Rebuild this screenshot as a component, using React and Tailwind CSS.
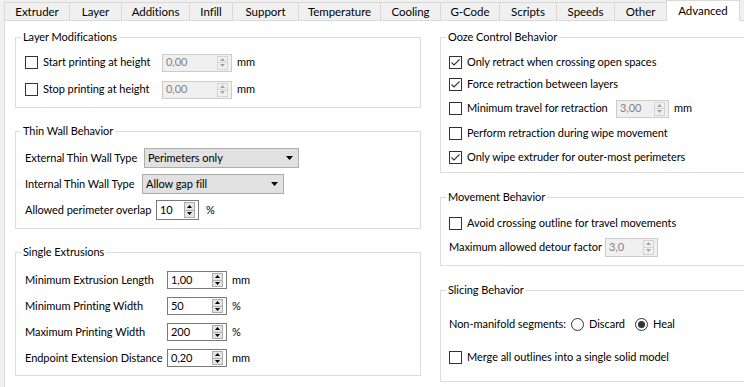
import React from 'react'

const TABS = [
  { label: 'Extruder', w: 65 },
  { label: 'Layer', w: 52 },
  { label: 'Additions', w: 68 },
  { label: 'Infill', w: 43 },
  { label: 'Support', w: 66 },
  { label: 'Temperature', w: 82 },
  { label: 'Cooling', w: 60 },
  { label: 'G-Code', w: 59 },
  { label: 'Scripts', w: 57 },
  { label: 'Speeds', w: 58 },
  { label: 'Other', w: 52 },
]

function CheckBox({ checked, label, className = '' }) {
  return (
    <div className={`flex items-center gap-[5px] ${className}`}>
      <svg width="13" height="13" viewBox="0 0 13 13" className="shrink-0">
        <rect x="0.5" y="0.5" width="12" height="12" fill="#fff" stroke="#333" />
        {checked && <path d="M2.5 6.5 L5 9 L10.5 3.5" fill="none" stroke="#333" strokeWidth="1.1" />}
      </svg>
      <span className="whitespace-nowrap">{label}</span>
    </div>
  )
}

function Radio({ checked, label, className = '' }) {
  return (
    <div className={`flex items-center gap-[5px] ${className}`}>
      <span className="flex h-[13px] w-[13px] shrink-0 items-center justify-center rounded-full border border-[#333] bg-white">
        {checked && <span className="h-[7px] w-[7px] rounded-full bg-[#333]" />}
      </span>
      <span className="whitespace-nowrap">{label}</span>
    </div>
  )
}

function Arrow({ up, color }) {
  return (
    <svg width="5" height="3" viewBox="0 0 5 3">
      <path d={up ? 'M0 3 L2.5 0 L5 3 Z' : 'M0 0 L5 0 L2.5 3 Z'} fill={color} />
    </svg>
  )
}

function SpinBox({ value, disabled, className = '' }) {
  const box = disabled
    ? 'border-[#cccccc] bg-[#f0f0f0] text-[#838383]'
    : 'border-[#7a7a7a] bg-white text-black'
  const btn = disabled ? 'border-[#d4d4d4] bg-[#f0f0f0]' : 'border-[#adadad] bg-[#e5e5e5]'
  const arrow = disabled ? '#a3a3a3' : '#000'
  return (
    <div className={`flex shrink-0 border ${box} ${className}`}>
      <span className="flex flex-1 items-center pl-[3px]">{value}</span>
      <div className="my-[1px] mr-[3px] flex w-[11px] flex-col">
        <div className={`flex flex-1 items-center justify-center border ${btn}`}>
          <Arrow up color={arrow} />
        </div>
        <div className={`-mt-px flex flex-1 items-center justify-center border ${btn}`}>
          <Arrow color={arrow} />
        </div>
      </div>
    </div>
  )
}

function ComboBox({ value, className = '' }) {
  return (
    <div className={`flex h-[20px] shrink-0 items-center justify-between border border-[#adadad] bg-[#e1e1e1] pl-[3px] pr-[5px] ${className}`}>
      <span className="whitespace-nowrap">{value}</span>
      <svg width="7" height="4" viewBox="0 0 7 4">
        <path d="M0 0 H7 L3.5 4 Z" fill="#000" />
      </svg>
    </div>
  )
}

function GroupBox({ title, className = '', children }) {
  return (
    <div className={`relative border border-[#dcdcdc] ${className}`}>
      <span className="absolute left-[5px] top-[-9px] bg-white px-[2px] leading-[16px] whitespace-nowrap">{title}</span>
      {children}
    </div>
  )
}

export default function App() {
  return (
    <div className="h-[387px] w-[744px] overflow-hidden bg-[#f0f0f0] font-['Segoe_UI',Lato,sans-serif] text-[11px] tracking-[-0.05px] text-black">
      {/* tabs */}
      <div className="flex h-[21px] pl-[4px] text-[11.5px]">
        {TABS.map((t) => (
          <div
            key={t.label}
            style={{ width: t.w }}
            className="mt-[2px] flex h-[18px] shrink-0 items-center justify-center border-l border-t border-[#d9d9d9] bg-[#f0f0f0]"
          >
            {t.label}
          </div>
        ))}
        <div className="relative z-10 flex h-[21px] w-[74px] shrink-0 items-center justify-center border-x border-t border-[#d9d9d9] bg-white pb-px">
          Advanced
        </div>
      </div>

      {/* page */}
      <div className="-mt-px ml-[4px] flex h-[400px] w-[800px] gap-[19px] border border-[#d9d9d9] bg-white pl-[10px] pt-[16px]">
        {/* left column */}
        <div className="flex w-[406px] shrink-0 flex-col">
          <GroupBox title="Layer Modifications" className="h-[71px] pl-[9px] pt-[11px]">
            <div className="flex h-[27px] items-center">
              <CheckBox label="Start printing at height" className="w-[137px]" />
              <SpinBox value="0,00" disabled className="h-[18px] w-[70px]" />
              <span className="ml-[5px]">mm</span>
            </div>
            <div className="flex h-[27px] items-center">
              <CheckBox label="Stop printing at height" className="w-[137px]" />
              <SpinBox value="0,00" disabled className="h-[18px] w-[70px]" />
              <span className="ml-[5px]">mm</span>
            </div>
          </GroupBox>

          <GroupBox title="Thin Wall Behavior" className="mt-[23px] h-[98px] pl-[9px] pt-[13px]">
            <div className="flex h-[26px] items-center">
              <span className="w-[119px] whitespace-nowrap">External Thin Wall Type</span>
              <ComboBox value="Perimeters only" className="w-[155px]" />
            </div>
            <div className="flex h-[26px] items-center">
              <span className="w-[117px] whitespace-nowrap">Internal Thin Wall Type</span>
              <ComboBox value="Allow gap fill" className="w-[142px]" />
            </div>
            <div className="flex h-[26px] items-center">
              <span className="w-[131px] whitespace-nowrap">Allowed perimeter overlap</span>
              <SpinBox value="10" className="h-[20px] w-[43px]" />
              <span className="ml-[7px]">%</span>
            </div>
          </GroupBox>

          <GroupBox title="Single Extrusions" className="mt-[23px] h-[124px] pl-[9px] pt-[14px]">
            {[
              ['Minimum Extrusion Length', '1,00', 'mm'],
              ['Minimum Printing Width', '50', '%'],
              ['Maximum Printing Width', '200', '%'],
              ['Endpoint Extension Distance', '0,20', 'mm'],
            ].map(([label, value, unit]) => (
              <div key={label} className="flex h-[26px] items-center">
                <span className="w-[142px] whitespace-nowrap">{label}</span>
                <SpinBox value={value} className="h-[18px] w-[60px]" />
                <span className="ml-[5px]">{unit}</span>
              </div>
            ))}
          </GroupBox>
        </div>

        {/* right column */}
        <div className="flex w-[330px] shrink-0 flex-col">
          <GroupBox title="Ooze Control Behavior" className="h-[136px] pl-[8px] pt-[13px]">
            <div className="flex h-[22px] items-center">
              <CheckBox checked label="Only retract when crossing open spaces" />
            </div>
            <div className="flex h-[23px] items-center">
              <CheckBox checked label="Force retraction between layers" />
            </div>
            <div className="flex h-[25px] items-center">
              <CheckBox label="Minimum travel for retraction" className="w-[167px]" />
              <SpinBox value="3,00" disabled className="h-[18px] w-[53px]" />
              <span className="ml-[5px]">mm</span>
            </div>
            <div className="flex h-[25px] items-center">
              <CheckBox label="Perform retraction during wipe movement" />
            </div>
            <div className="flex h-[22px] items-center">
              <CheckBox checked label="Only wipe extruder for outer-most perimeters" />
            </div>
          </GroupBox>

          <GroupBox title="Movement Behavior" className="mt-[24px] h-[69px] pl-[8px] pt-[14px]">
            <div className="flex h-[23px] items-center">
              <CheckBox label="Avoid crossing outline for travel movements" />
            </div>
            <div className="flex h-[24px] items-center">
              <span className="w-[156px] whitespace-nowrap">Maximum allowed detour factor</span>
              <SpinBox value="3,0" disabled className="h-[19px] w-[53px]" />
            </div>
          </GroupBox>

          <GroupBox title="Slicing Behavior" className="mt-[24px] h-[92px] pl-[8px] pt-[22px]">
            <div className="flex h-[22px] items-center">
              <span className="w-[122px] whitespace-nowrap">Non-manifold segments:</span>
              <Radio label="Discard" className="w-[64px]" />
              <Radio checked label="Heal" />
            </div>
            <div className="mt-[11px] flex h-[22px] items-center">
              <CheckBox label="Merge all outlines into a single solid model" />
            </div>
          </GroupBox>
        </div>
      </div>
    </div>
  )
}
